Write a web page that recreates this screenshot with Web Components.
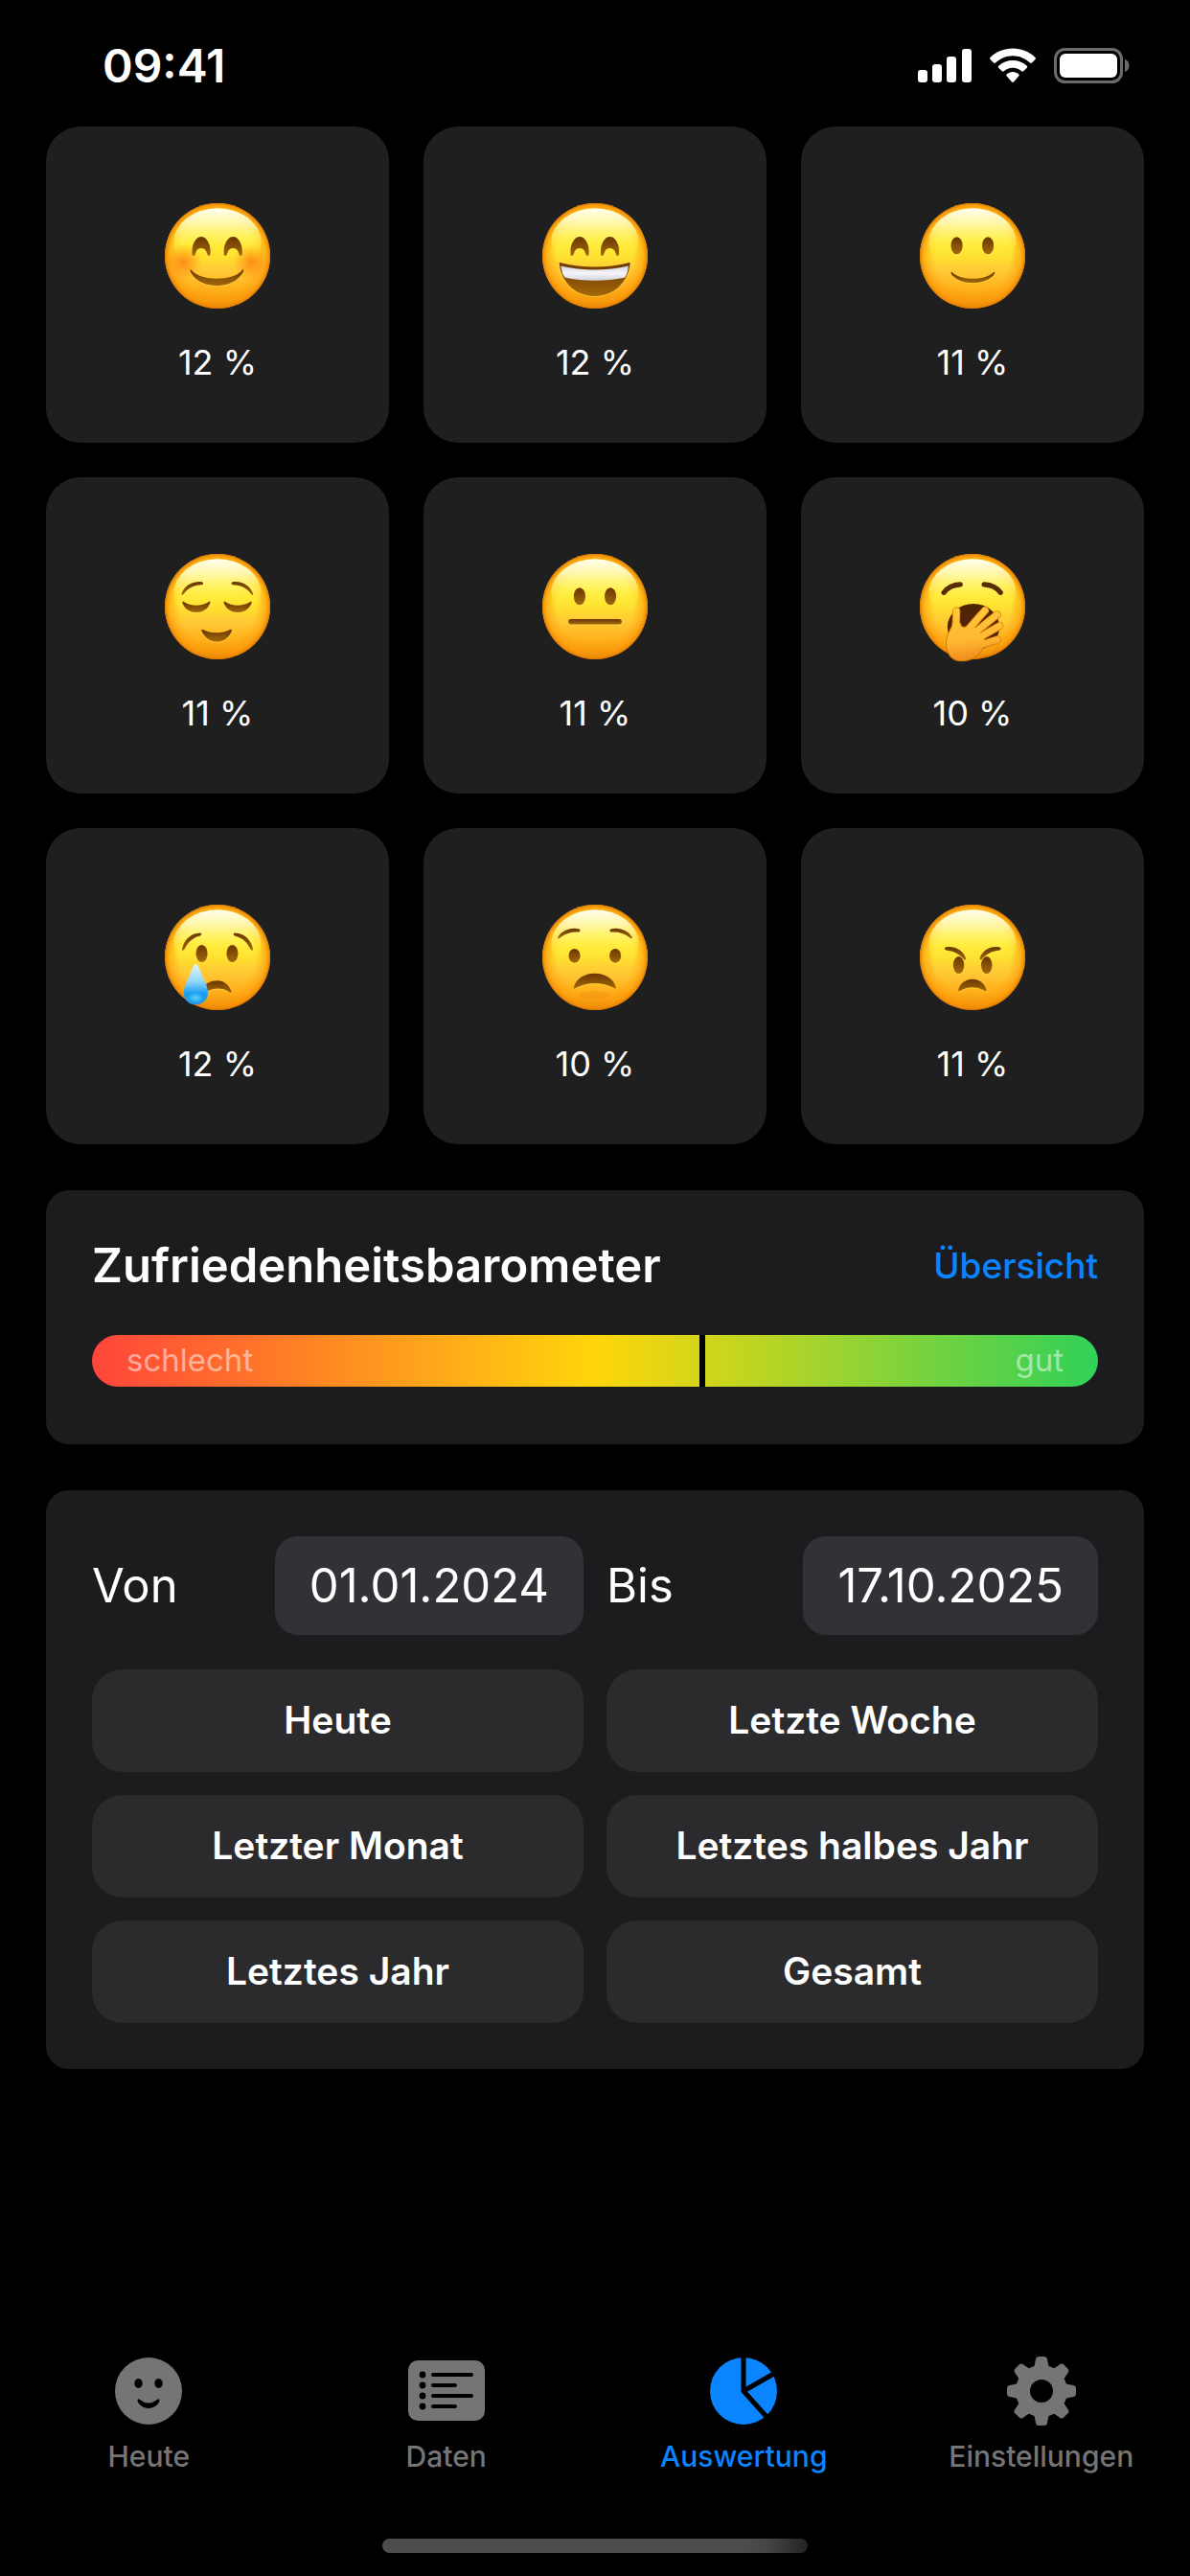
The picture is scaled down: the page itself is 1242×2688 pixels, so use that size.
<!DOCTYPE html>
<html lang="de">
<head>
<meta charset="utf-8">
<meta name="viewport" content="width=device-width, initial-scale=1">
<title>Auswertung</title>
<style>
  html {
    background: #000;
  }

  body {
    margin: 0;
    color: #fff;
    font-family: Inter, "Liberation Sans", sans-serif;
  }
</style>
</head>
<body>
<mood-app></mood-app>

<script>
// Small helper: attach an open shadow root and fill it
function mount(host, html) {
  if (!host.shadowRoot) host.attachShadow({ mode: 'open' });
  host.shadowRoot.innerHTML = html;
}

/**
 * Emoji face. The drawing area is 328 units wide.
 * Usage: <mood-face mood="blush"></mood-face>
 */
const arch = x => `<path transform="translate(${x} 104)" d="M4 60C-1 60 0 53 0 46C0 21 13 0 28.500 0C44 0 57 21 57 46C57 53 57 60 53 60C49 60 47 54 45 48C42 40 36 36 28 36C20 36 15 40 12 48C10 54 8 60 4 60Z"/>`;
const eyes = (x1, x2, y, rx, ry) => [x1, x2].map(x => `<ellipse cx="${x}" cy="${y}" rx="${rx}" ry="${ry}"/>`).join('');

const FACES = {
  blush: {
    under: '<circle cx="58" cy="184" r="58" fill="url(#blush)"/><circle cx="270" cy="184" r="58" fill="url(#blush)"/>',
    features: arch(85) + arch(184) +
      '<path d="M81 206C96 227 130 235 162 235C195 235 228 227 243 206C247 205 245 213 242 218C226 244 195 257 162 257C128 257 98 244 82 218C79 213 78 205 81 206Z"/>'
  },
  grin: {
    features: arch(88) + arch(182) +
      '<path d="M53 188C51 184 56 184 60 186C125 202 200 202 266 186C271 184 274 185 273 190C265 250 220 289 163 289C106 289 60 250 53 188Z"/>',
    over: '<path d="M58 195C125 211 200 211 268 195C266 213 262 226 256 232C200 244 126 244 71 232C64 224 60 211 58 195Z" fill="url(#teeth)"/>'
  },
  smile: {
    features: eyes(115, 212, 132, 18, 27) +
      '<path d="M99 214C115 230 140 235 165 235C190 235 215 230 231 214C235 213 233 220 229 225C213 241 189 248 165 248C141 248 117 241 101 225C97 220 96 213 99 214Z"/>'
  },
  relieved: {
    features:
      '<path d="M52 125C60 99 85 84 116 87C121 89 121 95 115 96C90 97 73 105 60 123C55 130 51 129 52 125Z"/>' +
      '<path d="M275 125C267 99 242 84 211 87C206 89 206 95 212 96C237 97 254 105 267 123C272 130 276 129 275 125Z"/>' +
      '<path d="M58 148C82 164 114 164 138 148C142 146 142 151 140 156C132 174 116 182 98 182C80 182 64 174 56 156C54 151 54 146 58 148Z"/>' +
      '<path d="M187 148C211 164 243 164 267 148C271 146 271 151 269 156C261 174 245 182 227 182C209 182 193 174 185 156C183 151 183 146 187 148Z"/>' +
      '<path d="M117 235C144 249 178 249 205 235C209 234 209 239 207 243C197 264 180 273 162 273C144 273 127 264 116 243C114 239 113 234 117 235Z"/>'
  },
  neutral: {
    features: eyes(116, 212, 132, 18, 27) + '<rect x="81" y="203" width="166" height="16" rx="8"/>'
  },
  yawn: {
    features:
      '<path d="M75 120Q92 97 126 95M251 120Q234 97 200 95" fill="none" stroke="#5b2c08" stroke-width="16" stroke-linecap="round"/>' +
      '<ellipse cx="167" cy="228" rx="81" ry="73" fill="#4f2505"/>',
    over:
      '<path d="M185 325C215 322 236 306 249 271Q236 312 203 320Z" fill="#a85a08"/>' +
      '<path d="M112 240L114 178M142 245L203 176M150 262L240 189M158 276L248 224M160 293L241 267" fill="none" stroke="#d97a08" stroke-width="25" stroke-linecap="round"/>' +
      '<path d="M82 275C82 250 96 240 103 215L126 215C128 235 145 226 166 222C196 248 215 270 193 300C180 320 158 333 130 333C98 333 82 310 82 275Z" fill="url(#hand)" stroke="#d97a08" stroke-width="3"/>' +
      '<path d="M112 240L114 178M142 245L203 176M150 262L240 189M158 276L248 224M160 293L241 267" fill="none" stroke="url(#hand)" stroke-width="20" stroke-linecap="round"/>'
  },
  cry: {
    features: eyes(115, 210, 152, 18, 27) +
      '<path d="M54 137C60 108 82 89 110 88C116 89 115 94 110 97C88 102 73 116 62 137C57 145 53 143 54 137Z"/>' +
      '<path d="M274 137C268 108 246 89 218 88C212 89 213 94 218 97C240 102 255 116 266 137C271 145 275 143 274 137Z"/>' +
      '<path d="M118 260C126 245 142 236 164 236C184 236 201 250 207 269C208 276 204 276 200 271C180 257 150 257 126 272Z"/>',
    over: '<path d="M96 184C103 184 109 203 120 229C130 249 134 259 134 275C134 297 117 311 96 311C75 311 59 297 59 275C59 259 64 249 73 229C84 203 90 184 96 184Z" fill="url(#tear)"/>' +
      '<ellipse cx="96" cy="290" rx="26" ry="16" fill="url(#glow)"/>'
  },
  worried: {
    under: '<ellipse cx="164" cy="280" rx="48" ry="12" fill="#f08a10" opacity=".35"/>',
    features: eyes(100, 227, 159, 18, 22) +
      '<path d="M49 101C60 80 90 69 115 76C119 79 119 85 114 85C90 84 71 90 56 102C50 108 47 106 49 101Z"/>' +
      '<path d="M279 101C268 80 238 69 213 76C209 79 209 85 214 85C238 84 257 90 272 102C278 108 281 106 279 101Z"/>' +
      '<path d="M98 257C105 230 132 214 163 214C195 214 222 230 229 257C230 263 226 262 222 259C187 240 140 240 105 259C101 262 97 263 98 257Z"/>'
  },
  angry: {
    features: eyes(121, 208, 188, 17, 27) +
      '<path d="M80 133C105 127 134 140 143 166C144 173 140 173 136 169C121 152 104 145 82 142C77 140 76 135 80 133Z"/>' +
      '<path d="M249 133C224 127 195 140 187 166C186 173 190 173 194 169C209 152 226 145 248 142C253 140 254 135 249 133Z"/>' +
      '<path d="M120 265C126 244 143 232 164 232C185 232 201 244 207 265C208 271 203 270 199 267C177 254 150 254 128 267C124 270 119 271 120 265Z"/>'
  }
};

class MoodFace extends HTMLElement {
  connectedCallback() {
    const face = FACES[this.getAttribute('mood')];
    mount(this, `
      <style>
        :host { display: block; width: 110px; height: 110px; }
        svg { display: block; width: 100%; height: 100%; overflow: visible; }
        .features { filter: drop-shadow(0 3px 1px rgba(255, 235, 90, .4)); }
      </style>
      <svg viewBox="0 0 328 328" aria-hidden="true">
        <defs>
          <linearGradient id="skin" x2="0" y2="1">
            <stop offset="0" stop-color="#ffd01a"/>
            <stop offset=".3" stop-color="#ffea32"/>
            <stop offset=".48" stop-color="#ffe02e"/>
            <stop offset=".65" stop-color="#ffc935"/>
            <stop offset=".83" stop-color="#ffae1a"/>
            <stop offset=".93" stop-color="#f29a10"/>
            <stop offset="1" stop-color="#cf7206"/>
          </linearGradient>
          <radialGradient id="rim">
            <stop offset=".72" stop-color="#ff9d08" stop-opacity="0"/>
            <stop offset=".9" stop-color="#fd9a08" stop-opacity=".55"/>
            <stop offset=".97" stop-color="#f28c06" stop-opacity=".85"/>
            <stop offset="1" stop-color="#d87200"/>
          </radialGradient>
          <linearGradient id="shine" x2="0" y2="1">
            <stop offset="0" stop-color="#fffff0"/>
            <stop offset=".22" stop-color="#fffcc0" stop-opacity=".85"/>
            <stop offset=".55" stop-color="#fff44c" stop-opacity=".4"/>
            <stop offset=".85" stop-color="#ffee30" stop-opacity="0"/>
          </linearGradient>
          <linearGradient id="ink" x2="0" y2="1">
            <stop offset="0" stop-color="#6a3702"/>
            <stop offset="1" stop-color="#a2680b"/>
          </linearGradient>
          <radialGradient id="blush">
            <stop offset="0" stop-color="#ff7a10" stop-opacity=".8"/>
            <stop offset=".5" stop-color="#ff8410" stop-opacity=".45"/>
            <stop offset="1" stop-color="#ff8a10" stop-opacity="0"/>
          </radialGradient>
          <linearGradient id="teeth" x2="0" y2="1">
            <stop offset="0" stop-color="#d5d7df"/>
            <stop offset=".5" stop-color="#f6f6fa"/>
            <stop offset="1" stop-color="#cfd2da"/>
          </linearGradient>
          <linearGradient id="tear" x2="0" y2="1">
            <stop offset="0" stop-color="#e9f6f6"/>
            <stop offset=".45" stop-color="#8ed5fa"/>
            <stop offset=".72" stop-color="#1ba0f2"/>
            <stop offset="1" stop-color="#1f98e2"/>
          </linearGradient>
          <radialGradient id="glow">
            <stop offset="0" stop-color="#6fdcff" stop-opacity=".8"/>
            <stop offset="1" stop-color="#6fdcff" stop-opacity="0"/>
          </radialGradient>
          <linearGradient id="hand" gradientUnits="userSpaceOnUse" x1="130" y1="170" x2="150" y2="333">
            <stop offset="0" stop-color="#ffc93a"/>
            <stop offset=".6" stop-color="#ffb832"/>
            <stop offset="1" stop-color="#f08a1a"/>
          </linearGradient>
        </defs>
        <circle cx="164" cy="164" r="164" fill="url(#skin)"/>
        <circle cx="164" cy="164" r="164" fill="url(#rim)"/>
        <ellipse cx="164" cy="122" rx="136" ry="106" fill="url(#shine)"/>
        ${face.under || ''}
        <g class="features" fill="url(#ink)">${face.features}</g>
        ${face.over || ''}
      </svg>
    `);
  }
}
customElements.define('mood-face', MoodFace);

// Tile with a face and its share
class MoodTile extends HTMLElement {
  connectedCallback() {
    mount(this, `
      <style>
        :host {
          display: flex;
          flex-direction: column;
          align-items: center;
          gap: 34px;
          padding: 80px 0 62px;
          background: #1f1f1f;
          border-radius: 36px;
          font-size: 36px;
          line-height: 44px;
        }
      </style>
      <mood-face mood="${this.getAttribute('mood')}"></mood-face>
      <span><slot></slot></span>
    `);
  }
}
customElements.define('mood-tile', MoodTile);

class StatusBar extends HTMLElement {
  connectedCallback() {
    mount(this, `
      <style>
        :host {
          display: flex;
          justify-content: space-between;
          align-items: center;
          height: 56px;
          padding: 40px 63px 36px 107px;
          font-size: 48px;
          font-weight: 600;
        }
        .icons { display: flex; gap: 19px; }
        svg { display: block; height: 37px; fill: #fff; }
      </style>
      <time>09:41</time>
      <div class="icons">
        <svg width="56" viewBox="0 0 56 37" aria-hidden="true">
          <rect y="23" width="10" height="13" rx="3"/>
          <rect x="15" y="17" width="10" height="19" rx="3"/>
          <rect x="30" y="9" width="10" height="27" rx="3"/>
          <rect x="46" y="1" width="10" height="35" rx="3"/>
        </svg>
        <svg width="48" viewBox="0 0 48 37" aria-hidden="true">
          <path d="M24 0.500C33 0.500 41.500 4 47.500 10Q48.300 11 47.500 12L44 15.500Q43 16.300 42 15.500C37 11 31 8.200 24 8.200S11 11 6 15.500Q5 16.300 4 15.500L0.500 12Q-.3 11 .5 10C6.500 4 15 .5 24 .5Z"/>
          <path d="M24 13C29.500 13 34.800 15 38.800 18.800Q39.700 19.700 38.800 20.700L35.200 24.300Q34.300 25.100 33.300 24.300C30.700 22 27.500 20.700 24 20.700S17.300 22 14.700 24.300Q13.700 25.100 12.800 24.300L9.200 20.700Q8.300 19.700 9.200 18.800C13.200 15 18.500 13 24 13Z"/>
          <path d="M24 25C26.500 25 28.600 25.900 30.400 27.500Q31.200 28.300 30.400 29.200L25 35.500Q24 36.400 23 35.500L17.600 29.200Q16.800 28.300 17.600 27.500C19.400 25.900 21.500 25 24 25Z"/>
        </svg>
        <svg width="79" viewBox="0 0 79 37" aria-hidden="true">
          <rect x="1.500" y="1.500" width="69" height="34" rx="10" fill="none" stroke="#6b6b6b" stroke-width="3"/>
          <rect x="6" y="6" width="60" height="25" rx="6"/>
          <path d="M74 12C80 14 80 23 74 25Z" fill="#6b6b6b"/>
        </svg>
      </div>
    `);
  }
}
customElements.define('status-bar', StatusBar);

class InfoCard extends HTMLElement {
  connectedCallback() {
    mount(this, `
      <style>
        :host {
          display: block;
          padding: 48px;
          background: #1c1c1e;
          border-radius: 24px;
        }
      </style>
      <slot></slot>
    `);
  }
}
customElements.define('info-card', InfoCard);

/**
 * Satisfaction scale with a marker.
 * Usage: <mood-barometer value="60.4"></mood-barometer>
 */
class MoodBarometer extends HTMLElement {
  connectedCallback() {
    mount(this, `
      <style>
        :host { display: block; padding-bottom: 12px; }
        header {
          display: flex;
          justify-content: space-between;
          align-items: center;
          margin-bottom: 41px;
          line-height: 62px;
        }
        h2 { margin: 0; font-size: 49px; font-weight: 600; }
        a { color: #0a84ff; font-size: 37px; font-weight: 500; text-decoration: none; }
        .scale {
          position: relative;
          display: flex;
          justify-content: space-between;
          padding: 0 36px 2px;
          border-radius: 27px;
          background: linear-gradient(90deg, #ff453a, #ffd60a 50%, #30d158);
          color: rgba(255, 255, 255, .5);
          font-size: 33px;
          line-height: 52px;
        }
        .marker {
          position: absolute;
          top: 0;
          bottom: 0;
          left: ${this.getAttribute('value')}%;
          width: 6px;
          background: #000;
        }
      </style>
      <header>
        <h2>Zufriedenheitsbarometer</h2>
        <a href="#uebersicht">Übersicht</a>
      </header>
      <div class="scale">
        <span>schlecht</span>
        <span>gut</span>
        <div class="marker"></div>
      </div>
    `);
  }
}
customElements.define('mood-barometer', MoodBarometer);

// Date range with its presets
class DateRange extends HTMLElement {
  connectedCallback() {
    const presets = ['Heute', 'Letzte Woche', 'Letzter Monat', 'Letztes halbes Jahr', 'Letztes Jahr', 'Gesamt'];
    mount(this, `
      <style>
        :host { display: block; }
        .dates, .presets {
          display: grid;
          grid-template-columns: 1fr 1fr;
          gap: 24px;
        }
        .dates { margin-bottom: 36px; font-size: 49px; }
        .field { display: flex; justify-content: space-between; align-items: center; }
        input, button {
          box-sizing: border-box;
          margin: 0;
          border: 0;
          color: #fff;
          font-family: inherit;
        }
        input {
          field-sizing: content;
          height: 103px;
          padding: 0 36px;
          border-radius: 24px;
          background: #323135;
          font-size: 49px;
        }
        button {
          height: 107px;
          padding: 0 24px 2px;
          border-radius: 32px;
          background: #2b2b2d;
          font-size: 39px;
          font-weight: 600;
        }
      </style>
      <div class="dates">
        <div class="field"><label for="from">Von</label><input id="from" value="01.01.2024"></div>
        <div class="field"><label for="to">Bis</label><input id="to" value="17.10.2025"></div>
      </div>
      <div class="presets">
        ${presets.map(text => `<button type="button">${text}</button>`).join('')}
      </div>
    `);
  }
}
customElements.define('date-range', DateRange);

const TAB_ICONS = {
  face: `<svg width="70" height="72" viewBox="0 0 70 72">
      <circle cx="35" cy="36" r="35"/>
      <g fill="#000"><ellipse cx="24.500" cy="28" rx="4.200" ry="5"/><ellipse cx="45.500" cy="28" rx="4.200" ry="5"/></g>
      <path d="M23.500 45Q24 43.500 26 45Q35 52 44 45Q46 43.500 46.500 45C47 48 42 54 35 54S23 48 23.500 45Z" fill="#000"/>
    </svg>`,
  list: `<svg width="80" height="72" viewBox="0 0 80 72">
      <rect y="4" width="80" height="63" rx="10"/>
      <g fill="#000">
        <circle cx="15" cy="19" r="3.400"/><circle cx="15" cy="30" r="3.400"/><circle cx="15" cy="41" r="3.400"/><circle cx="15" cy="52" r="3.400"/>
        <rect x="24" y="17" width="44" height="4" rx="2"/><rect x="24" y="28" width="27" height="4" rx="2"/>
        <rect x="24" y="39" width="44" height="4" rx="2"/><rect x="24" y="50" width="27" height="4" rx="2"/>
      </g>
    </svg>`,
  pie: `<svg width="70" height="72" viewBox="0 0 70 72">
      <circle cx="35" cy="36" r="35"/>
      <path d="M35 -1V36L61 65M35 36L70 16" fill="none" stroke="#000" stroke-width="5"/>
    </svg>`,
  gear: `<svg width="72" height="72" viewBox="0 0 72 72">
      <circle cx="36" cy="36" r="27"/>
      ${[0, 45, 90, 135, 180, 225, 270, 315].map(a => `<path transform="rotate(${a} 36 36)" d="M24 13Q28.500 12 29 8L30 2.500Q30.500 0 33 0H39Q41.500 0 42 2.500L43 8Q43.500 12 48 13Z"/>`).join('')}
      <circle cx="36" cy="36" r="12" fill="#000"/>
    </svg>`
};

class TabItem extends HTMLElement {
  connectedCallback() {
    mount(this, `
      <style>
        :host { display: block; color: #757575; }
        :host([active]) { color: #0a84ff; }
        a {
          display: flex;
          flex-direction: column;
          align-items: center;
          gap: 14px;
          color: inherit;
          font-size: 30px;
          font-weight: 500;
          line-height: 36px;
          text-decoration: none;
        }
        svg { display: block; fill: currentColor; }
      </style>
      <a href="#${this.getAttribute('icon')}" ${this.hasAttribute('active') ? 'aria-current="page"' : ''}>
        ${TAB_ICONS[this.getAttribute('icon')]}
        <span><slot></slot></span>
      </a>
    `);
  }
}
customElements.define('tab-item', TabItem);

class TabBar extends HTMLElement {
  connectedCallback() {
    mount(this, `
      <style>
        :host { display: block; padding-bottom: 24px; }
        nav {
          display: grid;
          grid-template-columns: repeat(4, 1fr);
          margin-bottom: 68px;
        }
        .home {
          width: 444px;
          height: 15px;
          margin: 0 auto;
          border-radius: 8px;
          background: linear-gradient(90deg, #4d4d4d 84%, #444 91%, #222);
        }
      </style>
      <nav><slot></slot></nav>
      <div class="home"></div>
    `);
  }
}
customElements.define('tab-bar', TabBar);

class MoodApp extends HTMLElement {
  connectedCallback() {
    mount(this, `
      <style>
        :host {
          display: flex;
          flex-direction: column;
          min-height: 100vh;
        }
        main {
          display: flex;
          flex-direction: column;
          gap: 48px;
          padding: 0 48px 48px;
        }
        .tiles {
          display: grid;
          grid-template-columns: repeat(3, 1fr);
          gap: 36px;
        }
        tab-bar { margin-top: auto; }
      </style>
      <status-bar></status-bar>
      <main>
        <div class="tiles">
          <mood-tile mood="blush">12 %</mood-tile>
          <mood-tile mood="grin">12 %</mood-tile>
          <mood-tile mood="smile">11 %</mood-tile>
          <mood-tile mood="relieved">11 %</mood-tile>
          <mood-tile mood="neutral">11 %</mood-tile>
          <mood-tile mood="yawn">10 %</mood-tile>
          <mood-tile mood="cry">12 %</mood-tile>
          <mood-tile mood="worried">10 %</mood-tile>
          <mood-tile mood="angry">11 %</mood-tile>
        </div>
        <info-card><mood-barometer value="60.4"></mood-barometer></info-card>
        <info-card><date-range></date-range></info-card>
      </main>
      <tab-bar>
        <tab-item icon="face">Heute</tab-item>
        <tab-item icon="list">Daten</tab-item>
        <tab-item icon="pie" active>Auswertung</tab-item>
        <tab-item icon="gear">Einstellungen</tab-item>
      </tab-bar>
    `);
  }
}
customElements.define('mood-app', MoodApp);
</script>
</body>
</html>
